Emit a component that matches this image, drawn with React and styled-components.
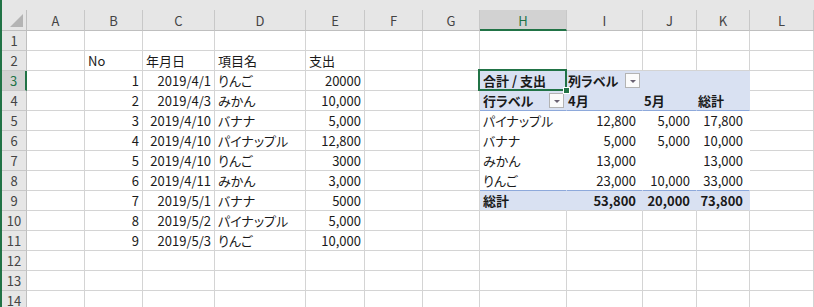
import React from "react"
import styled, { createGlobalStyle } from "styled-components"

const GREEN = "#217346"
const GRID = "#d4d4d4"
const HEAD_BG = "#e6e6e6"
const PIVOT_BG = "#d9e1f2"
const PIVOT_RULE = "#8ea9db"

const GlobalStyle = createGlobalStyle`
  body {
    margin: 0;
    background: #fff;
    overflow: hidden;
    font-family: "Noto Sans CJK JP", "Noto Sans", sans-serif;
  }
`

const Window = styled.div`
  width: 814px;
  height: 307px;
  box-sizing: border-box;
  border-left: 2px solid ${GREEN};
  overflow: hidden;
`

const TopStrip = styled.div`
  height: 10px;
  background: ${HEAD_BG};
`

const Sheet = styled.div`
  display: grid;
  grid-template-columns: 25px 58px 58px 72px 91px 59px 58px 57px 87px 76px 54px 53px 64px;
  grid-template-rows: 21px;
  grid-auto-rows: 20px;
  font-size: 13px;
  color: #1a1a1a;
  font-feature-settings: "palt";
`

const Corner = styled.div`
  position: relative;
  background: ${HEAD_BG};
  box-sizing: border-box;
  border-right: 1px solid #bfbfbf;
  border-bottom: 1px solid #bfbfbf;

  &::after {
    content: "";
    position: absolute;
    right: 3px;
    bottom: 3px;
    border-left: 13px solid transparent;
    border-bottom: 13px solid #b4b4b4;
  }
`

const ColHeader = styled.div`
  box-sizing: border-box;
  display: flex;
  align-items: center;
  justify-content: center;
  background: ${p => (p.$selected ? "#d2d2d2" : HEAD_BG)};
  color: ${p => (p.$selected ? GREEN : "#444")};
  border-right: 1px solid #c8c8c8;
  border-bottom: ${p => (p.$selected ? `2px solid ${GREEN}` : "1px solid #bfbfbf")};
  padding-top: ${p => (p.$selected ? "1px" : "0")};
`

const RowHeader = styled.div`
  box-sizing: border-box;
  display: flex;
  align-items: center;
  justify-content: center;
  background: ${p => (p.$selected ? "#d2d2d2" : HEAD_BG)};
  color: ${p => (p.$selected ? GREEN : "#444")};
  border-right: ${p => (p.$selected ? `2px solid ${GREEN}` : "1px solid #bfbfbf")};
  border-bottom: 1px solid #c8c8c8;
`

const Cell = styled.div`
  position: relative;
  box-sizing: border-box;
  display: flex;
  align-items: center;
  gap: 7px;
  justify-content: ${p => p.$justify || "flex-start"};
  padding: 0 ${p => p.$padRight ?? 3}px 0 ${p => p.$padLeft ?? 3}px;
  white-space: nowrap;
  font-weight: ${p => (p.$bold ? 700 : 400)};
  background: ${p => p.$fill || "transparent"};
  border-right: 1px solid ${p => (p.$open ? "transparent" : GRID)};
  border-bottom: 1px solid ${p => p.$rule || GRID};
  z-index: ${p => (p.$active ? 2 : "auto")};

  ${p =>
    p.$active &&
    `
    &::before {
      content: "";
      position: absolute;
      left: -2px;
      top: -2px;
      right: -1px;
      bottom: -1px;
      border: 2px solid ${GREEN};
    }
    &::after {
      content: "";
      position: absolute;
      right: -4px;
      bottom: -4px;
      width: 5px;
      height: 5px;
      background: ${GREEN};
      border: 1px solid #fff;
    }
  `}
`

const FilterButton = styled.span`
  width: 15px;
  height: 15px;
  box-sizing: border-box;
  flex: none;
  border: 1px solid #b3b3b3;
  background: #fbfbfb;
  display: inline-flex;
  align-items: center;
  justify-content: center;

  &::after {
    content: "";
    margin-top: 1px;
    border-left: 3px solid transparent;
    border-right: 3px solid transparent;
    border-top: 3px solid #6a6272;
  }
`

const columns = ["A", "B", "C", "D", "E", "F", "G", "H", "I", "J", "K", "L"]

const ledger = [
  ["1", "2019/4/1", "りんご", "20000"],
  ["2", "2019/4/3", "みかん", "10,000"],
  ["3", "2019/4/10", "バナナ", "5,000"],
  ["4", "2019/4/10", "パイナップル", "12,800"],
  ["5", "2019/4/10", "りんご", "3000"],
  ["6", "2019/4/11", "みかん", "3,000"],
  ["7", "2019/5/1", "バナナ", "5000"],
  ["8", "2019/5/2", "パイナップル", "5,000"],
  ["9", "2019/5/3", "りんご", "10,000"],
]

const pivotBody = [
  ["パイナップル", "12,800", "5,000", "17,800"],
  ["バナナ", "5,000", "5,000", "10,000"],
  ["みかん", "13,000", "", "13,000"],
  ["りんご", "23,000", "10,000", "33,000"],
]
const pivotTotal = ["総計", "53,800", "20,000", "73,800"]

// one row of the sheet -> 12 cell descriptions (A..L)
function buildRow(r) {
  const cells = columns.map(() => ({ text: "" }))

  if (r === 2) {
    cells[1] = { text: "No" }
    cells[2] = { text: "年月日" }
    cells[3] = { text: "項目名" }
    cells[4] = { text: "支出" }
  }

  const item = ledger[r - 3]
  if (item) {
    cells[1] = { text: item[0], justify: "flex-end" }
    cells[2] = { text: item[1], justify: "flex-end" }
    cells[3] = { text: item[2] }
    cells[4] = { text: item[3], justify: "flex-end" }
  }

  // pivot table H3:K9
  const head = { fill: PIVOT_BG, open: true, rule: PIVOT_BG, bold: true, padLeft: 1 }
  if (r === 3) {
    cells[7] = { ...head, text: "合計 / 支出", active: true, padLeft: 3 }
    cells[8] = { ...head, text: "列ラベル", filter: true }
    cells[9] = { ...head }
    cells[10] = { ...head }
  }
  if (r === 4) {
    const h = { ...head, rule: PIVOT_RULE }
    cells[7] = { ...h, text: "行ラベル", filter: true, justify: "space-between", padLeft: 3, padRight: 2 }
    cells[8] = { ...h, text: "4月" }
    cells[9] = { ...h, text: "5月" }
    cells[10] = { ...h, text: "総計" }
  }
  const body = pivotBody[r - 5]
  if (body) {
    const rule = r === 8 ? PIVOT_RULE : "#fff"
    cells[7] = { text: body[0], fill: "#fff", open: true, rule }
    ;[1, 2, 3].forEach(i => {
      cells[7 + i] = { text: body[i], fill: "#fff", open: true, rule, justify: "flex-end", padRight: 6 }
    })
  }
  if (r === 9) {
    cells[7] = { text: pivotTotal[0], fill: PIVOT_BG, open: true, bold: true }
    ;[1, 2, 3].forEach(i => {
      cells[7 + i] = { text: pivotTotal[i], fill: PIVOT_BG, open: true, bold: true, justify: "flex-end", padRight: 6 }
    })
  }
  return cells
}

export default function App() {
  const rows = Array.from({ length: 14 }, (_, i) => i + 1)

  return (
    <Window>
      <GlobalStyle />
      <TopStrip />
      <Sheet>
        <Corner />
        {columns.map(c => (
          <ColHeader key={c} $selected={c === "H"}>{c}</ColHeader>
        ))}

        {rows.map(r => (
          <React.Fragment key={r}>
            <RowHeader $selected={r === 3}>{r}</RowHeader>
            {buildRow(r).map((cell, i) => (
              <Cell
                key={columns[i]}
                $justify={cell.justify}
                $bold={cell.bold}
                $fill={cell.fill}
                $open={cell.open}
                $rule={cell.rule}
                $active={cell.active}
                $padLeft={cell.padLeft}
                $padRight={cell.padRight}
              >
                {cell.text}
                {cell.filter && <FilterButton />}
              </Cell>
            ))}
          </React.Fragment>
        ))}
      </Sheet>
    </Window>
  )
}
